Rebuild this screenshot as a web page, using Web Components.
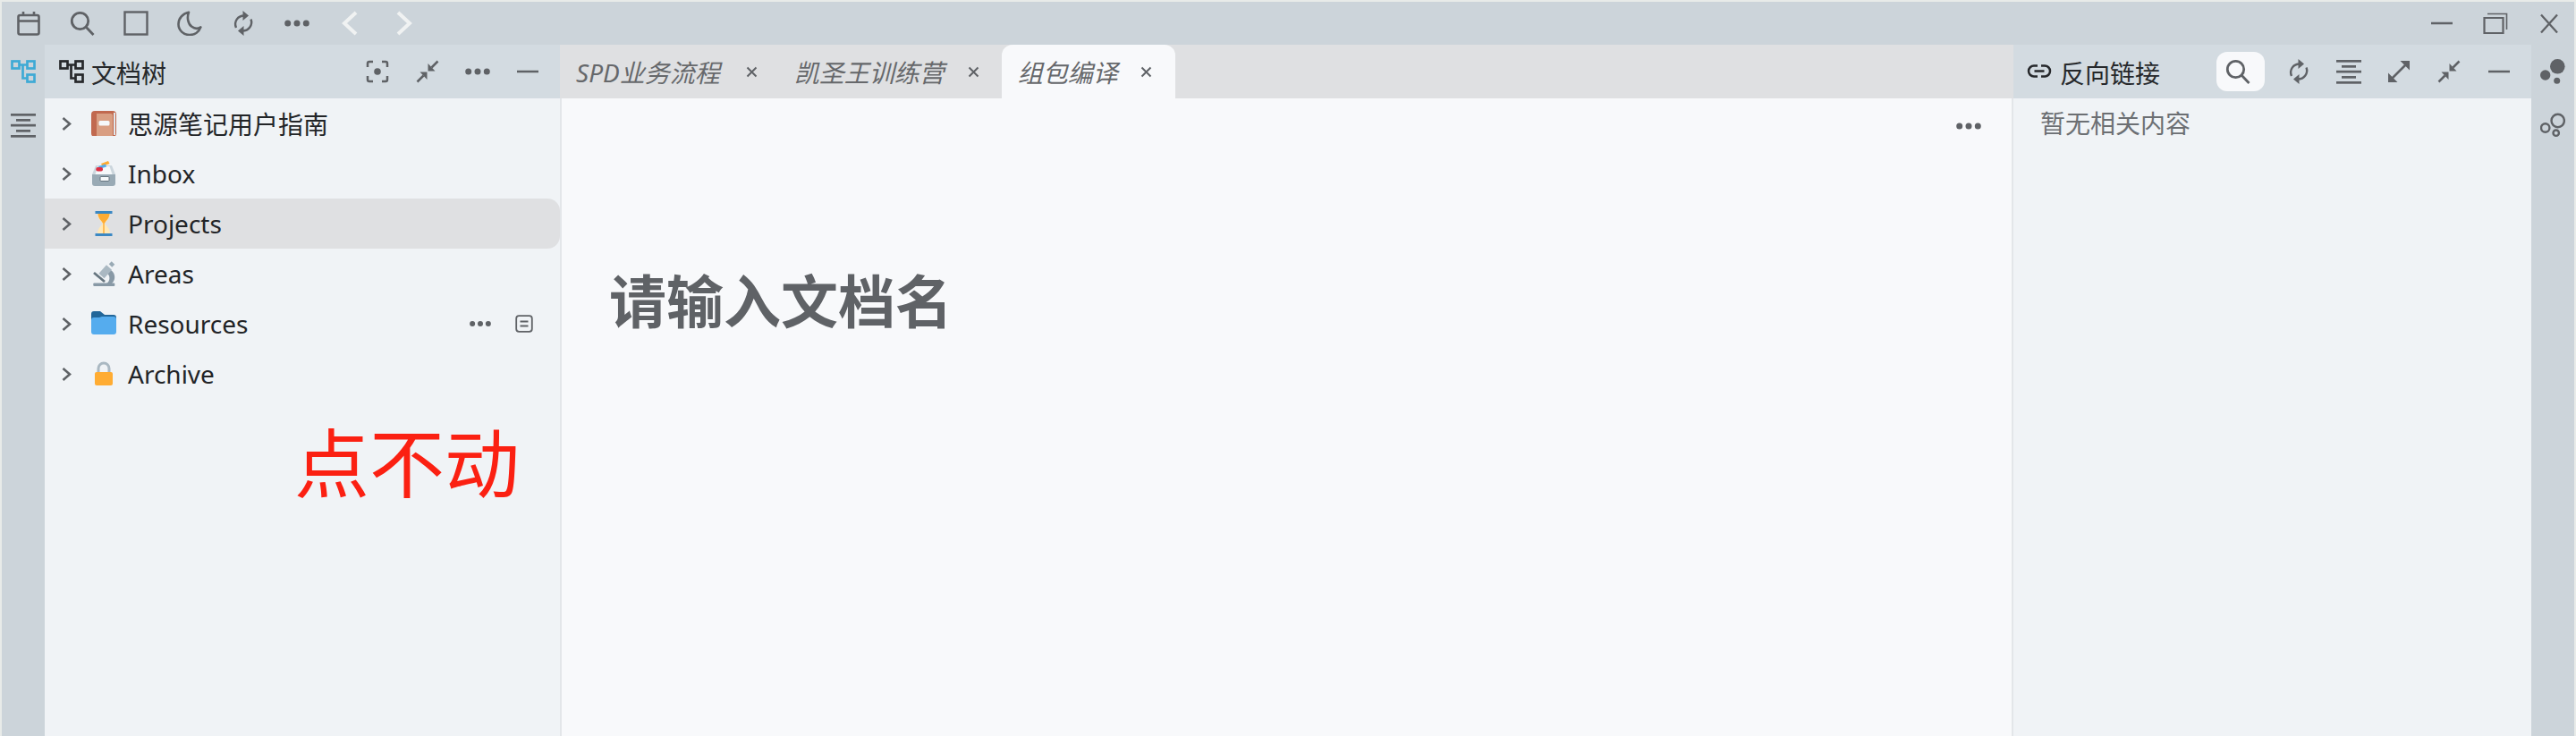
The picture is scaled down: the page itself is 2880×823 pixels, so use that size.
<!DOCTYPE html>
<html lang="zh">
<head>
<meta charset="utf-8">
<title>SiYuan</title>
<style>
  html, body { margin: 0; height: 100%; background: #e8ebe9; }
  body {
    font-family: "Noto Sans", "Noto Sans CJK SC", sans-serif;
    font-size: 28px;
    color: #222427;
    overflow: hidden;
  }
</style>
</head>
<body>
<si-window>
  <si-titlebar slot="titlebar"></si-titlebar>
  <si-dock slot="left" items="tree:#3eaad5,outline"></si-dock>
  <si-panel slot="left" label="文档树" icon="tree" style="--panel-width:576px;--title-gap:8px;--pad-left:16px">
    <si-icon slot="actions" name="focus"></si-icon>
    <si-icon slot="actions" name="collapse"></si-icon>
    <si-icon slot="actions" name="dots"></si-icon>
    <si-icon slot="actions" name="minus"></si-icon>
    <si-tree-row icon="book">思源笔记用户指南</si-tree-row>
    <si-tree-row icon="inbox">Inbox</si-tree-row>
    <si-tree-row icon="hourglass" selected>Projects</si-tree-row>
    <si-tree-row icon="microscope">Areas</si-tree-row>
    <si-tree-row icon="folder" actions>Resources</si-tree-row>
    <si-tree-row icon="lock">Archive</si-tree-row>
    <si-note>点不动</si-note>
  </si-panel>
  <si-center slot="center">
    <si-tab slot="tabs" style="--tab-gap:29px;--tab-end:23px">SPD业务流程</si-tab>
    <si-tab slot="tabs" style="--tab-end:25px">凯圣王训练营</si-tab>
    <si-tab slot="tabs" style="--tab-gap:25px" active>组包编译</si-tab>
    <si-title>请输入文档名</si-title>
  </si-center>
  <si-panel slot="right" label="反向链接" icon="link" style="--panel-width:579px;--title-gap:9px;--pad-left:15px">
    <si-search-btn slot="actions"></si-search-btn>
    <si-icon slot="actions" name="sync"></si-icon>
    <si-icon slot="actions" name="outline"></si-icon>
    <si-icon slot="actions" name="expand"></si-icon>
    <si-icon slot="actions" name="collapse"></si-icon>
    <si-icon slot="actions" name="minus"></si-icon>
    <si-empty>暂无相关内容</si-empty>
  </si-panel>
  <si-dock slot="right" items="bubbles,bubbles-line"></si-dock>
</si-window>

<script>
const ICONS = {
  calendar: `<g fill="none" stroke="currentColor" stroke-width="2.6"><rect x="2.5" y="5" width="23" height="21.5" rx="2"/><path d="M2.5 11.5h23M8 1v4M20 1v4"/></g>`,
  search: `<g fill="none" stroke="currentColor" stroke-width="2.8"><circle cx="11.5" cy="11.5" r="9.2"/><path d="M18 18l8.5 9"/></g>`,
  square: `<rect x="1.5" y="1.5" width="25" height="25" fill="none" stroke="currentColor" stroke-width="2.4"/>`,
  moon: `<path d="M13 1.8C6.5 3 1.5 8.4 1.5 15 1.5 21.9 7.1 27 14 27c5.7 0 10.5-3.4 12.4-8.6-2.6 1.6-6.7 1.9-10-.6C12 14.7 10.8 7.5 13 1.8z" fill="none" stroke="currentColor" stroke-width="2.6" stroke-linejoin="round"/>`,
  sync: `<g fill="none" stroke="currentColor" stroke-width="2.4"><path d="M6 19C3 12 8 5.5 15 5.5"/><path d="M22.5 9.5C25 16 20 22.5 13 22.5"/></g><path d="M13.5 0L20 5.5 13.5 11zM14.5 17L8 22.5 14.5 28z" fill="currentColor"/>`,
  dots: `<g fill="currentColor"><circle cx="3.7" cy="14" r="3.5"/><circle cx="14" cy="14" r="3.5"/><circle cx="24.3" cy="14" r="3.5"/></g>`,
  back: `<path d="M20 2L7 14l13 12" fill="none" stroke="currentColor" stroke-width="4"/>`,
  forward: `<path d="M7 2l13 12L7 26" fill="none" stroke="currentColor" stroke-width="4"/>`,
  tree: `<g fill="none" stroke="currentColor" stroke-width="2.7"><rect x="1.5" y="2.5" width="8" height="8"/><rect x="18.5" y="2.5" width="8" height="8"/><rect x="18.5" y="17.5" width="8" height="8"/><path d="M9.5 6.5h9M13.5 6.5v15h5"/></g>`,
  outline: `<g fill="currentColor"><rect x="0" y="1" width="28" height="2.7"/><rect x="6" y="7" width="16" height="2.7"/><rect x="0" y="12.8" width="28" height="2.7"/><rect x="6" y="19" width="16" height="2.7"/><rect x="0" y="25" width="28" height="2.7"/></g>`,
  focus: `<path d="M3 9V5a2 2 0 0 1 2-2h4M19 3h4a2 2 0 0 1 2 2v4M25 19v4a2 2 0 0 1-2 2h-4M9 25H5a2 2 0 0 1-2-2v-4" fill="none" stroke="currentColor" stroke-width="2.5"/><circle cx="14" cy="14" r="3.8" fill="currentColor"/>`,
  collapse: `<g fill="currentColor"><path d="M13.5 14.5V23L5.5 14.5zM14.5 13.5V5l8 8.5z"/></g><path d="M2.5 25.5l7-7M25.5 2.5l-7 7" stroke="currentColor" stroke-width="2.5"/>`,
  expand: `<g fill="currentColor"><path d="M26 2v10.5L15.5 2zM2 26V15.5L12.5 26z"/></g><path d="M6 22L22 6" stroke="currentColor" stroke-width="2.5"/>`,
  minus: `<path d="M2 14h24" stroke="currentColor" stroke-width="2.5"/>`,
  link: `<path d="M12 7.5H8a6 6 0 0 0 0 12h4M16 7.5h4a6 6 0 0 1 0 12h-4M8.5 13.5h11" fill="none" stroke="currentColor" stroke-width="2.5"/>`,
  bubbles: `<g fill="currentColor"><circle cx="19.3" cy="8.3" r="8.3"/><circle cx="5.7" cy="18" r="5.7"/><circle cx="18.7" cy="24.3" r="3.5"/></g>`,
  "bubbles-line": `<g fill="none" stroke="currentColor" stroke-width="2.4"><circle cx="19.7" cy="9" r="7.2"/><circle cx="5.7" cy="17" r="4.7"/><circle cx="17.7" cy="22.7" r="3.2"/></g>`,
  book: `<rect x="0" y="0" width="28" height="29" rx="4" fill="#c1694f"/><rect x="25" y="2" width="2" height="25" fill="#e1e8ed"/><path d="M6 3h16a2 2 0 0 1 2 2v24H6z" fill="#d99e82"/><rect x="8.5" y="11" width="12" height="5.5" rx="1.5" fill="#f5f8fa"/>`,
  inbox: `<path d="M5 5h18l4 10H1z" fill="#ccd6dd"/><path d="M7.5 6h13l3 9h-19z" fill="#f5f8fa"/><path d="M11 3l8-3 1.5 3-8 3z" fill="#ffac33"/><path d="M8 6l8-2.5 1 3-8 2.5z" fill="#55acee"/><rect x="5.3" y="7" width="7.7" height="4.5" rx="2" fill="#dd2e44"/><path d="M1 15h26v10a3 3 0 0 1-3 3H4a3 3 0 0 1-3-3z" fill="#99aab5"/><rect x="10" y="17.5" width="10" height="5" rx="1" fill="#f5f8fa" stroke="#66757f" stroke-width="1"/>`,
  hourglass: `<path d="M7 2h14c0 7-4 9-6 12 2 3 6 5 6 12H7c0-7 4-9 6-12-2-3-6-5-6-12z" fill="#ffe8b6"/><path d="M7.5 3h13c-.3 5.5-4 7.5-5.500 10.5h-2C11.5 10.5 7.8 8.5 7.5 3z" fill="#ffac33"/><rect x="13.3" y="13" width="1.4" height="12" fill="#ffac33"/><rect x="4.5" y="0" width="19" height="3" fill="#3b88c3"/><rect x="4.5" y="25" width="19" height="3" fill="#3b88c3"/>`,
  microscope: `<rect x="2.3" y="24.5" width="24" height="3.5" rx="1" fill="#8899a6"/><path d="M20 9a9.5 9.5 0 0 1 3 16h-6a7 7 0 0 0 0-12z" fill="#8899a6"/><path d="M11.5 16.5l8.5-9.5" stroke="#aab8c2" stroke-width="8"/><path d="M21.5 5l3-3" stroke="#99aab5" stroke-width="5"/><path d="M3 13l12 10" stroke="#66757f" stroke-width="2.8"/>`,
  folder: `<path d="M0 3a3 3 0 0 1 3-3h7l5 4h10a3 3 0 0 1 3 3v15H0z" fill="#226699"/><path d="M0 10a3 3 0 0 1 3-3h6l3-1h13a3 3 0 0 1 3 3v14a3 3 0 0 1-3 3H3a3 3 0 0 1-3-3z" fill="#55acee"/>`,
  lock: `<path d="M8 14V8a6 6 0 0 1 12 0v6" fill="none" stroke="#aab8c2" stroke-width="3"/><rect x="4" y="12" width="20" height="15" rx="2" fill="#ffac33"/>`,
  close: `<path d="M1.5 1.5l10 10M11.5 1.5l-10 10" stroke="currentColor" stroke-width="2" fill="none"/>`,
  winclose: `<path d="M5 1.5l18 20M23 1.5l-18 20" stroke="currentColor" stroke-width="2.3" fill="none"/>`,
  restore: `<path d="M1.5 7h21v17h-21z" fill="none" stroke="currentColor" stroke-width="2.2"/><path d="M5 2.5h21.5V20" fill="none" stroke="currentColor" stroke-width="1.6"/>`,
  chevron: `<path d="M2.5 2l7.5 6.5L2.5 15" fill="none" stroke="currentColor" stroke-width="2.6"/>`,
  doc: `<rect x="1.2" y="1.2" width="17.6" height="17.6" rx="3" fill="none" stroke="currentColor" stroke-width="1.8"/><path d="M5.5 7.5h9M5.5 12.5h9" stroke="currentColor" stroke-width="1.8"/>`,
};

// size of the few icons that are not drawn on the usual 28 box
const ICON_BOX = { close: [13, 13], chevron: [12, 17], doc: [20, 20], winclose: [28, 23], restore: [28, 26] };

class SiIcon extends HTMLElement {
  constructor() {
    super();
    this.attachShadow({ mode: "open" });
  }

  connectedCallback() {
    const name = this.getAttribute("name");
    const [w, h] = ICON_BOX[name] || [28, 28];
    this.shadowRoot.innerHTML = `
      <style>
        :host { display: inline-flex; flex: none; width: ${w}px; height: ${h}px; color: var(--icon-color, #5f6266); }
        svg { display: block; }
      </style>
      <svg width="${w}" height="${h}" viewBox="0 0 ${w} ${h}">${ICONS[name] || ""}</svg>
    `;
  }
}

class SiWindow extends HTMLElement {
  constructor() {
    super();
    this.attachShadow({ mode: "open" });
    this.shadowRoot.innerHTML = `
      <style>
        :host {
          display: flex;
          flex-direction: column;
          height: 100vh;
          box-sizing: border-box;
          padding: 2px 2px 0 2px;
        }
        .main { flex: 1; display: flex; min-height: 0; }
      </style>
      <slot name="titlebar"></slot>
      <div class="main">
        <slot name="left"></slot>
        <slot name="center"></slot>
        <slot name="right"></slot>
      </div>
    `;
  }
}

class SiTitlebar extends HTMLElement {
  constructor() {
    super();
    this.attachShadow({ mode: "open" });
    const left = ["calendar", "search", "square", "moon", "sync", "dots"];
    this.shadowRoot.innerHTML = `
      <style>
        :host {
          display: flex;
          align-items: center;
          height: 48px;
          background: #ccd4da;
          padding: 0 14px 0 16px;
        }
        .group { display: flex; gap: 32px; align-items: center; }
        .nav { --icon-color: #f0f2f2; }
        .right { margin-left: auto; }
      </style>
      <div class="group">
        ${left.map((n) => `<si-icon name="${n}"></si-icon>`).join("")}
        <si-icon class="nav" name="back"></si-icon>
        <si-icon class="nav" name="forward"></si-icon>
      </div>
      <div class="group right">
        <si-icon name="minus"></si-icon>
        <si-icon name="restore"></si-icon>
        <si-icon name="winclose"></si-icon>
      </div>
    `;
  }
}

class SiDock extends HTMLElement {
  constructor() {
    super();
    this.attachShadow({ mode: "open" });
  }

  connectedCallback() {
    const items = (this.getAttribute("items") || "").split(",");
    this.shadowRoot.innerHTML = `
      <style>
        :host {
          display: flex;
          flex-direction: column;
          align-items: center;
          gap: 32px;
          flex: none;
          width: 48px;
          height: 100%;
          box-sizing: border-box;
          padding-top: 16px;
          background: #ccd4da;
        }
      </style>
      ${items
        .map((item) => {
          const [name, color] = item.split(":");
          return `<si-icon name="${name}" style="${color ? `--icon-color:${color}` : ""}"></si-icon>`;
        })
        .join("")}
    `;
  }
}

class SiPanel extends HTMLElement {
  constructor() {
    super();
    this.attachShadow({ mode: "open" });
  }

  connectedCallback() {
    const label = this.getAttribute("label") || "";
    const icon = this.getAttribute("icon") || "";
    this.shadowRoot.innerHTML = `
      <style>
        :host {
          display: flex;
          flex-direction: column;
          position: relative;
          flex: none;
          width: var(--panel-width);
          height: 100%;
          background: #f0f3f6;
        }
        header {
          display: flex;
          align-items: center;
          flex: none;
          height: 60px;
          box-sizing: border-box;
          padding: 0 22px 0 var(--pad-left);
          background: #d3dbe1;
        }
        .label { display: flex; align-items: center; gap: var(--title-gap); color: #26282b; --icon-color: #26282b; }
        .label span { padding-top: 2px; }
        .actions { display: flex; align-items: center; gap: 28px; margin-left: auto; }
      </style>
      <header>
        <div class="label"><si-icon name="${icon}"></si-icon><span>${label}</span></div>
        <div class="actions"><slot name="actions"></slot></div>
      </header>
      <slot></slot>
    `;
  }
}

class SiTreeRow extends HTMLElement {
  constructor() {
    super();
    this.attachShadow({ mode: "open" });
  }

  connectedCallback() {
    const icon = this.getAttribute("icon");
    const more = this.hasAttribute("actions")
      ? `<span class="more"><si-icon name="dots" class="small"></si-icon><si-icon name="doc"></si-icon></span>`
      : "";
    this.shadowRoot.innerHTML = `
      <style>
        :host {
          display: flex;
          align-items: center;
          height: 56px;
          padding: 0 30px 0 18px;
          color: #222427;
        }
        :host([selected]) { background: #dfe0e2; border-radius: 0 14px 14px 0; }
        .chevron { margin-right: 22px; }
        .label { margin-left: 13px; }
        .more { display: flex; align-items: center; gap: 27px; margin-left: auto; }
        .small { transform: scale(0.86); margin-right: -2px; }
      </style>
      <si-icon class="chevron" name="chevron"></si-icon>
      <si-icon name="${icon}"></si-icon>
      <span class="label"><slot></slot></span>
      ${more}
    `;
  }
}

class SiNote extends HTMLElement {
  constructor() {
    super();
    this.attachShadow({ mode: "open" });
    this.shadowRoot.innerHTML = `
      <style>
        :host {
          position: absolute;
          left: 279px;
          top: 408px;
          font-size: 84px;
          line-height: 120px;
          color: #fb2012;
        }
      </style>
      <slot></slot>
    `;
  }
}

class SiCenter extends HTMLElement {
  constructor() {
    super();
    this.attachShadow({ mode: "open" });
    this.shadowRoot.innerHTML = `
      <style>
        :host { display: flex; flex-direction: column; flex: 1; min-width: 0; height: 100%; }
        .tabs { display: flex; flex: none; height: 60px; background: #dfe0e2; }
        .editor {
          flex: 1;
          background: #f8f9fb;
          border-left: 2px solid #e3e6e9;
          border-right: 2px solid #e3e6e9;
        }
        .toolbar { display: flex; justify-content: flex-end; align-items: center; height: 62px; padding-right: 34px; }
        .body { padding: 0 0 0 53px; }
      </style>
      <div class="tabs"><slot name="tabs"></slot></div>
      <div class="editor">
        <div class="toolbar"><si-icon name="dots"></si-icon></div>
        <div class="body"><slot></slot></div>
      </div>
    `;
  }
}

class SiTab extends HTMLElement {
  constructor() {
    super();
    this.attachShadow({ mode: "open" });
    this.shadowRoot.innerHTML = `
      <style>
        :host {
          display: flex;
          align-items: center;
          gap: var(--tab-gap, 26px);
          height: 60px;
          box-sizing: border-box;
          padding: 0 var(--tab-end, 26px) 0 18px;
          color: #66686b;
          font-style: italic;
        }
        :host([active]) { background: #f8f9fb; border-radius: 12px 12px 0 0; }
      </style>
      <span><slot></slot></span>
      <si-icon name="close"></si-icon>
    `;
  }
}

class SiTitle extends HTMLElement {
  constructor() {
    super();
    this.attachShadow({ mode: "open" });
    this.shadowRoot.innerHTML = `
      <style>
        :host {
          display: block;
          margin-top: 120px;
          font-size: 64px;
          line-height: 90px;
          font-weight: 700;
          color: #5f6266;
        }
      </style>
      <slot></slot>
    `;
  }
}

class SiEmpty extends HTMLElement {
  constructor() {
    super();
    this.attachShadow({ mode: "open" });
    this.shadowRoot.innerHTML = `
      <style>
        :host {
          display: block;
          height: 56px;
          line-height: 56px;
          padding-left: 30px;
          color: #6c6f73;
        }
      </style>
      <slot></slot>
    `;
  }
}

class SiSearchBtn extends HTMLElement {
  constructor() {
    super();
    this.attachShadow({ mode: "open" });
    this.shadowRoot.innerHTML = `
      <style>
        :host {
          display: flex;
          align-items: center;
          width: 54px;
          height: 44px;
          box-sizing: border-box;
          padding-left: 10px;
          margin-right: -4px;
          background: #f8f9fb;
          border-radius: 12px;
        }
      </style>
      <si-icon name="search"></si-icon>
    `;
  }
}

customElements.define("si-icon", SiIcon);
customElements.define("si-window", SiWindow);
customElements.define("si-titlebar", SiTitlebar);
customElements.define("si-dock", SiDock);
customElements.define("si-panel", SiPanel);
customElements.define("si-tree-row", SiTreeRow);
customElements.define("si-note", SiNote);
customElements.define("si-center", SiCenter);
customElements.define("si-tab", SiTab);
customElements.define("si-title", SiTitle);
customElements.define("si-empty", SiEmpty);
customElements.define("si-search-btn", SiSearchBtn);
</script>
</body>
</html>
